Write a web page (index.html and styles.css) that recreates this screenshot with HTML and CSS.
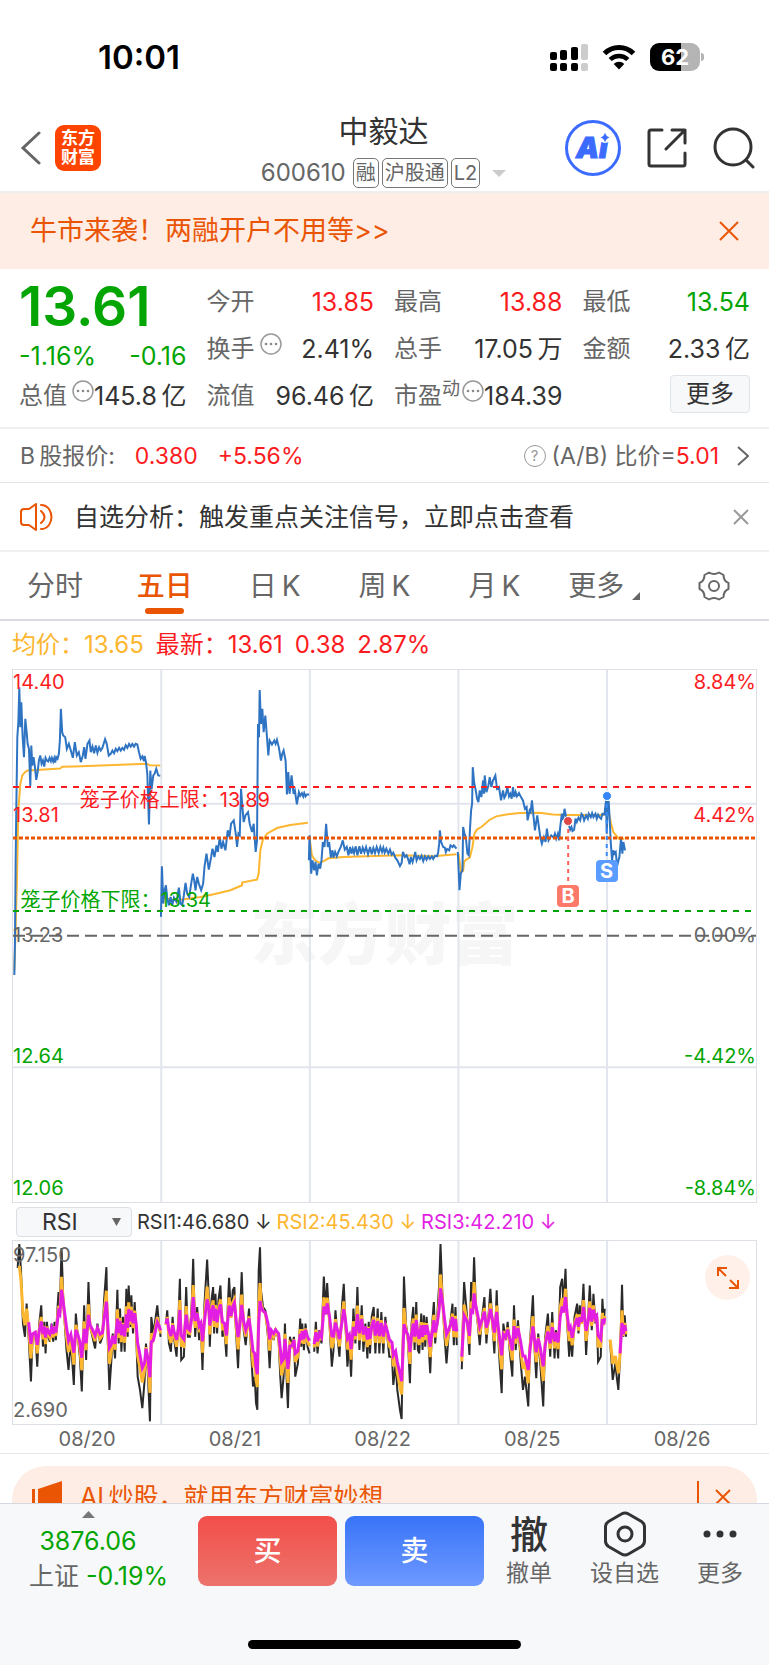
FILE: index.html
```html
<!DOCTYPE html>
<html lang="zh-CN">
<head>
    <meta charset="UTF-8">
    <meta name="viewport" content="width=device-width, initial-scale=1.0">
    <title>中毅达 600610</title>
    <link rel="stylesheet" href="styles.css">
</head>
<body>

    <header>
        <div class="status-bar">
            <span class="clock">10:01</span>
            <div class="status-icons">
                <svg width="38" height="27" viewBox="0 0 38 27">
                    <rect x="0" y="8" width="7" height="8" rx="2"/>
                    <rect x="10" y="6" width="7" height="10" rx="2"/>
                    <rect x="21" y="3" width="7" height="13" rx="2"/>
                    <rect x="31" y="0" width="7" height="16" rx="2" fill="#ccc"/>
                    <rect x="0" y="19" width="7" height="8" rx="2"/>
                    <rect x="10" y="19" width="7" height="8" rx="2"/>
                    <rect x="21" y="19" width="7" height="8" rx="2"/>
                    <rect x="31" y="19" width="7" height="8" rx="2" fill="#ccc"/>
                </svg>
                <svg width="34" height="26" viewBox="0 0 34 26">
                    <path d="M2.500 9.500a20.500 20.500 0 0 1 29 0" fill="none" stroke="#000" stroke-width="5"/>
                    <path d="M8.200 15.500a12.500 12.500 0 0 1 17.600 0" fill="none" stroke="#000" stroke-width="4.500"/>
                    <path d="M17 25.500l-5.300-5.500a7.500 7.500 0 0 1 10.600 0z"/>
                </svg>
                <div class="battery">62</div>
            </div>
        </div>

        <nav class="nav">
            <div class="nav-side">
                <button class="icon-btn" aria-label="返回">
                    <svg width="22" height="34" viewBox="0 0 22 34" fill="none" stroke="#666" stroke-width="3"><path d="M19 2L3 17l16 15" stroke-linecap="round"/></svg>
                </button>
                <a class="logo" href="#">东方<br>财富</a>
            </div>
            <div class="nav-title">
                <h1>中毅达</h1>
                <div class="code-row">
                    <span class="code">600610</span>
                    <span class="tag">融</span>
                    <span class="tag">沪股通</span>
                    <span class="tag">L2</span>
                    <svg class="caret" width="14" height="7" viewBox="0 0 14 7"><path d="M0 0h14L7 7z" fill="#ccc"/></svg>
                </div>
            </div>
            <div class="nav-side nav-right">
                <button class="icon-btn" aria-label="Ai">
                    <svg width="56" height="56" viewBox="0 0 56 56">
                        <circle cx="28" cy="28" r="26.500" fill="#fff" stroke="#3b6bff" stroke-width="3"/>
                        <text class="ai-text" x="11" y="38">Ai</text>
                        <circle cx="40" cy="17" r="6" fill="#fff"/>
                        <path d="M40 12.500q1 4 4.500 5-3.500 1-4.500 5-1-4-4.500-5 3.500-1 4.500-5z" fill="#3b6bff"/>
                    </svg>
                </button>
                <button class="icon-btn" aria-label="分享">
                    <svg width="40" height="40" viewBox="0 0 40 40" fill="none" stroke="#333" stroke-width="3" stroke-linecap="round" stroke-linejoin="round"><path d="M15 2H4Q2 2 2 4v32q0 2 2 2h32q2 0 2-2V25M25 2h13v13M38 2L19 21"/></svg>
                </button>
                <button class="icon-btn" aria-label="搜索">
                    <svg width="42" height="42" viewBox="0 0 42 42" fill="none" stroke="#333" stroke-width="3" stroke-linecap="round"><circle cx="20" cy="20" r="18"/><path d="M33 33l7 7"/></svg>
                </button>
            </div>
        </nav>
    </header>

    <main>
        <div class="banner">
            <a href="#">牛市来袭！两融开户不用等&gt;&gt;</a>
            <button class="icon-btn" aria-label="关闭">
                <svg width="20" height="20" viewBox="0 0 20 20" stroke="#ea5504" stroke-width="2"><path d="M1 1l18 18M19 1L1 19"/></svg>
            </button>
        </div>

        <section class="quote">
            <div class="price-box">
                <div class="price">13.61</div>
                <div class="cell green"><b>-1.16%</b><b>-0.16</b></div>
            </div>
            <div class="cell"><span>今开</span><b class="red">13.85</b></div>
            <div class="cell"><span>最高</span><b class="red">13.88</b></div>
            <div class="cell"><span>最低</span><b class="green">13.54</b></div>
            <div class="cell"><span>换手<svg class="dots" viewBox="0 0 22 22"><use href="#more-dots"/></svg></span><b>2.41%</b></div>
            <div class="cell"><span>总手</span><b>17.05&thinsp;万</b></div>
            <div class="cell"><span>金额</span><b>2.33&thinsp;亿</b></div>
            <div class="cell"><span>总值<svg class="dots" viewBox="0 0 22 22"><use href="#more-dots"/></svg></span><b>145.8&thinsp;亿</b></div>
            <div class="cell"><span>流值</span><b>96.46&thinsp;亿</b></div>
            <div class="cell pe"><span>市盈<sup>动</sup><svg class="dots" viewBox="0 0 22 22"><use href="#more-dots"/></svg></span><b>184.39</b></div>
            <div class="cell cell-more"><button class="more-btn">更多</button></div>
        </section>

        <div class="b-share">
            <span>B&thinsp;股报价:</span>
            <span class="red">0.380</span>
            <span class="red">+5.56%</span>
            <a class="ratio" href="#">
                <i class="help">?</i>
                <span>(A/B) 比价=<span class="red">5.01</span></span>
                <svg width="12" height="20" viewBox="0 0 12 20" fill="none" stroke="#666" stroke-width="2"><path d="M1 1l10 9-10 9"/></svg>
            </a>
        </div>

        <div class="notice">
            <svg width="34" height="28" viewBox="0 0 34 28" fill="none" stroke="#ea5504" stroke-width="2" stroke-linecap="round" stroke-linejoin="round"><path d="M16 1v26l-7-5H4q-3 0-3-3V9q0-3 3-3h5zM21 8q7 6 0 12M21 2q5 0 8 4 5 8 0 16-3 4-8 4"/></svg>
            <a href="#">自选分析：触发重点关注信号，立即点击查看</a>
            <button class="icon-btn" aria-label="关闭">
                <svg width="16" height="16" viewBox="0 0 16 16" stroke="#999" stroke-width="2"><path d="M1 1l14 14M15 1L1 15"/></svg>
            </button>
        </div>

        <div class="tabs">
            <button>分时</button>
            <button class="active">五日</button>
            <button>日&thinsp;K</button>
            <button>周&thinsp;K</button>
            <button>月&thinsp;K</button>
            <button>更多<svg class="corner" width="8" height="8" viewBox="0 0 8 8"><path d="M8 0v8H0z" fill="#666"/></svg></button>
            <button aria-label="设置">
                <svg width="32" height="30" viewBox="0 0 32 30" fill="none" stroke="#666" stroke-width="2" stroke-linejoin="round"><path d="M11 1.500q5 3 10 0l4.500 2.500q0 6 5 8v6q-5 2-5 8L21 28.500q-5-3-10 0L6.500 26q0-6-5-8v-6q5-2 5-8z"/><circle cx="16" cy="15" r="5"/></svg>
            </button>
        </div>

        <div class="legend">
            <span class="yellow">均价：13.65</span>
            <span class="red">最新：13.61</span>
            <span class="red">0.38</span>
            <span class="red">2.87%</span>
        </div>

        <div class="chart">
            <span class="watermark">东方财富</span>
            <svg class="plot" viewBox="36 28 2235 1599" preserveAspectRatio="none">
                <g class="grid">
                    <path d="M482 28v1599M929 28v1599M1376 28v1599M1823 28v1599M36 430h2235M36 1222h2235"/>
                </g>
                <g class="avg-line">
                    <polyline points="40,930 44,800 48,650 52,450 58,370 64,345 72,335 80,330 130,327 178,324 184,319 220,318 300,315 438,310 448,314 479,315"/>
                    <polyline points="486,690 492,712 515,720 545,718 600,710 640,702 690,690 725,675 725,667 770,658 775,640 780,570 787,540 800,520 830,503 870,494 923,487"/>
                    <polyline points="928,530 935,585 945,600 958,608 972,602 985,594 1030,590 1100,588 1200,585 1300,588 1370,582"/>
                    <polyline points="1376,580 1384,635 1390,632 1393,605 1400,597 1410,592 1418,560 1424,520 1432,507 1445,500 1470,478 1490,468 1520,462 1560,458 1620,457 1660,462 1700,464 1815,464"/>
                    <polyline points="1822,450 1830,465 1835,490 1842,515 1850,525 1858,535 1875,535"/>
                </g>
                <g class="price-line">
                    <polyline points="40,945 42,840 44,600 46,440 49,230 52,185 55,80 58,200 61,125 65,230 69,290 73,175 77,215 80,250 84,265 88,378 91,255 94,315 98,290 102,320 106,358 110,335 114,300 118,285 122,310 126,300 130,318 134,292 138,300 142,303 146,292 150,302 153,292 157,303 160,293 163,306 166,290 170,295 174,280 177,240 180,145 184,215 187,225 193,230 198,265 204,250 210,270 216,292 222,245 228,285 234,275 240,305 246,285 250,260 254,295 260,250 266,240 270,275 275,258 280,278 285,255 290,277 295,260 300,270 305,262 313,236 318,250 324,285 330,280 335,270 340,278 345,265 350,272 355,262 360,270 365,262 370,268 375,254 380,262 385,250 390,258 395,250 400,258 405,250 410,252 415,275 420,295 425,288 430,302 432,286 436,305 440,340 445,492 449,330 453,385 458,345 462,340 467,325 473,345 479,346"/>
                    <polyline points="481,770 484,618 488,730 492,690 496,675 500,715 505,735 510,710 515,735 520,712 528,725 535,682 540,730 545,735 550,705 555,668 560,700 566,710 572,670 577,640 581,660 585,690 590,650 595,670 602,690 608,670 612,620 618,580 625,628 632,590 636,565 642,590 648,555 652,575 658,530 663,565 668,545 675,570 682,510 687,530 692,490 700,480 706,520 710,560 714,520 718,525 722,385 726,440 730,485 735,465 743,455 748,490 755,515 760,490 766,575 770,540 773,190 776,230 778,88 782,190 786,145 790,215 795,165 800,230 804,285 808,240 815,252 822,240 826,250 830,238 836,262 842,300 846,280 850,270 856,300 860,402 864,335 868,400 874,345 880,400 884,390 886,405 890,432 896,395 900,406 905,398 909,408 912,398 916,408 920,402 927,402"/>
                    <polyline points="926,600 928,525 933,640 937,600 942,630 946,605 950,645 955,610 960,625 964,600 968,545 973,560 978,490 983,560 987,545 992,592 997,570 1000,592 1005,575 1010,588 1016,572 1022,560 1028,540 1034,568 1040,560 1045,585 1050,560 1054,580 1058,565 1062,578 1067,558 1072,585 1078,558 1083,580 1088,562 1093,576 1098,560 1104,582 1110,560 1115,582 1120,563 1125,578 1130,560 1136,578 1141,560 1146,575 1150,562 1154,577 1159,565 1165,580 1170,568 1175,583 1180,577 1186,592 1192,600 1200,617 1205,608 1209,575 1215,590 1220,585 1225,598 1229,612 1233,590 1238,605 1243,587 1246,575 1250,600 1255,588 1260,596 1265,586 1270,602 1275,588 1280,598 1285,588 1290,596 1296,588 1300,596 1306,586 1312,588 1315,575 1318,550 1320,510 1324,545 1330,560 1335,562 1338,575 1342,566 1348,570 1352,555 1358,560 1362,555 1370,565"/>
                    <polyline points="1374,575 1377,640 1379,690 1383,640 1388,630 1390,500 1394,520 1398,530 1403,580 1407,585 1411,500 1414,450 1417,430 1419,320 1423,365 1428,390 1432,415 1436,425 1440,390 1445,410 1450,360 1453,400 1455,345 1460,395 1466,375 1470,350 1475,380 1480,360 1487,345 1492,385 1498,380 1504,420 1510,390 1514,412 1518,405 1523,380 1528,408 1532,400 1536,415 1540,380 1544,410 1548,395 1552,408 1558,398 1564,410 1570,420 1576,445 1581,440 1584,480 1590,450 1593,455 1597,420 1602,470 1606,510 1613,465 1618,500 1622,530 1627,550 1633,530 1638,545 1642,505 1647,540 1655,525 1662,532 1666,520 1670,535 1675,520 1679,540 1682,500 1687,460 1691,480 1695,445 1700,470 1706,485 1712,508 1716,500 1719,512 1724,508 1728,475 1732,485 1737,472 1742,480 1746,460 1750,465 1754,480 1760,465 1765,475 1768,460 1774,470 1778,458 1782,470 1788,460 1792,475 1796,463 1800,470 1805,475 1809,460 1815,462 1820,420 1822,520 1825,425 1828,425 1831,480 1834,545 1838,600 1842,570 1845,580 1849,575 1852,605 1855,610 1860,590 1865,535 1869,580 1872,545 1877,570"/>
                </g>
                <path class="limit up" d="M36 380h2235"/>
                <path class="limit down" d="M36 752h2235"/>
                <path class="limit zero" d="M36 827h2235"/>
                <path class="limit now" d="M36 533h2235"/>
                <path class="buy-line" d="M1706 482v192"/>
                <path class="sell-line" d="M1822 407v194"/>
            </svg>
            <div class="axis left">
                <span class="red">14.40</span>
                <span class="red upper">13.81</span>
                <span class="grey">13.23</span>
                <span class="green lower">12.64</span>
                <span class="green">12.06</span>
            </div>
            <div class="axis right">
                <span class="red">8.84%</span>
                <span class="red upper">4.42%</span>
                <span class="grey">0.00%</span>
                <span class="green lower">-4.42%</span>
                <span class="green">-8.84%</span>
            </div>
            <span class="cage cage-up">笼子价格上限：13.89</span>
            <span class="cage cage-down">笼子价格下限：13.34</span>
            <i class="dot buy-dot"></i>
            <i class="dot sell-dot"></i>
            <span class="mark buy-mark">B</span>
            <span class="mark sell-mark">S</span>
        </div>

        <div class="rsi-row">
            <label class="picker">
                <select aria-label="指标">
                    <option>RSI</option>
                    <option>MACD</option>
                    <option>KDJ</option>
                </select>
                <svg width="9" height="8" viewBox="0 0 9 8"><path d="M0 0h9L4.500 8z" fill="#666"/></svg>
            </label>
            <span>RSI1:46.680 ↓</span>
            <span class="yellow">RSI2:45.430 ↓</span>
            <span class="magenta">RSI3:42.210 ↓</span>
        </div>

        <div class="chart rsi-chart">
            <svg class="plot" viewBox="36 151 2235 552" preserveAspectRatio="none">
                <g class="grid"><path d="M482 151v552M929 151v552M1376 151v552M1823 151v552"/></g>
                <g id="rsi1" class="rsi1"></g>
                <g id="rsi2" class="rsi2"></g>
                <g id="rsi3" class="rsi3"></g>
            </svg>
            <div class="axis left">
                <span class="grey">97.150</span>
                <span class="grey">2.690</span>
            </div>
            <button class="expand" aria-label="全屏">
                <svg width="24" height="24" viewBox="0 0 24 24" fill="none" stroke="#ea5504" stroke-width="2"><path d="M2 10V2h9M2 2l8 8M22 14v8h-9M22 22l-8-8"/></svg>
            </button>
        </div>

        <div class="dates">
            <span>08/20</span>
            <span>08/21</span>
            <span>08/22</span>
            <span>08/25</span>
            <span>08/26</span>
        </div>

        <div class="promo">
            <svg width="30" height="32" viewBox="0 0 30 32" fill="#ea5504"><path d="M0 8h3v17H0zM6 8L30 0v32L6 25z"/></svg>
            <a href="#">AI&thinsp;炒股，就用东方财富妙想</a>
            <button class="icon-btn" aria-label="关闭">
                <svg width="16" height="16" viewBox="0 0 16 16" stroke="#ea5504" stroke-width="2"><path d="M1 1l14 14M15 1L1 15"/></svg>
            </button>
        </div>
    </main>

    <footer>
        <div class="trade-bar">
            <a class="index" href="#">
                <svg width="13" height="7" viewBox="0 0 13 7"><path d="M0 7h13L6.500 0z" fill="#777"/></svg>
                <span class="index-value green">3876.06</span>
                <span class="index-change">上证 <span class="green">-0.19%</span></span>
            </a>
            <button class="trade buy">买</button>
            <button class="trade sell">卖</button>
            <button class="tool"><span class="tool-glyph">撤</span>撤单</button>
            <button class="tool">
                <svg width="42" height="46" viewBox="0 0 42 46" fill="none" stroke="#333" stroke-width="3" stroke-linejoin="round"><path d="M17.500 3q3.500-2 7 0l13 7.500q3 2 3 5.500v14q0 3.500-3 5.500l-13 7.500q-3.500 2-7 0l-13-7.500q-3-2-3-5.500V16q0-3.500 3-5.500z"/><circle cx="21" cy="23" r="7"/></svg>
                设自选
            </button>
            <button class="tool">
                <svg width="34" height="46" viewBox="0 0 34 46" fill="#333"><circle cx="4" cy="23" r="3.500"/><circle cx="17" cy="23" r="3.500"/><circle cx="30" cy="23" r="3.500"/></svg>
                更多
            </button>
        </div>
        <div class="home-bar"></div>
    </footer>

    <svg class="defs" width="0" height="0">
        <symbol id="more-dots" viewBox="0 0 22 22">
            <circle cx="11" cy="11" r="10" fill="none" stroke="#999" stroke-width="1.500"/>
            <circle cx="6" cy="11" r="1.300" fill="#888"/><circle cx="11" cy="11" r="1.300" fill="#888"/><circle cx="16" cy="11" r="1.300" fill="#888"/>
        </symbol>
    </svg>

    <script src="rsi.js"></script>
</body>
</html>
```
FILE: rsi.js
```js
// x,y pairs of the fast RSI line, one string per trading day
const days = [
    "50,232 55,160 60,240 66,400 72,440 77,340 83,440 90,575 95,440 103,430 109,530 115,400 121,345 126,470 130,395 134,490 138,395 142,440 147,455 152,400 157,455 161,395 165,450 170,350 173,305 177,350 182,172 187,320 191,390 197,480 203,540 210,450 219,585 225,370 231,440 237,500 243,605 250,345 253,440 256,510 263,275 268,410 275,440 283,475 290,400 298,460 305,440 310,330 317,230 321,450 326,600 332,510 336,430 343,505 350,298 354,460 358,355 362,485 367,380 372,485 377,295 381,440 384,285 389,410 392,315 397,430 402,335 406,420 411,560 418,600 425,655 432,570 436,460 442,560 448,695 452,380 458,430 464,390 470,345 475,400 480,440",
    "496,400 500,360 505,460 511,485 516,380 521,450 528,500 533,400 538,265 542,510 550,500 557,290 562,440 568,440 574,330 578,205 584,440 590,350 596,450 601,400 606,540 612,340 620,207 625,320 628,470 633,330 638,290 641,430 645,310 650,430 654,330 660,285 666,440 672,420 678,500 682,350 686,262 692,380 697,300 702,290 707,430 713,535 718,400 724,245 730,420 736,465 746,355 752,480 758,590 763,560 767,640 771,660 775,240 779,170 782,300 788,350 795,360 803,440 808,535 813,420 820,450 826,415 835,450 840,560 844,625 850,560 854,400 858,540 863,655 869,440 876,470 881,440 885,560 893,520 900,385 903,470 906,400 911,480 916,400 922,470 928,490",
    "942,485 947,395 952,490 958,420 964,460 968,340 971,258 977,360 981,278 988,400 995,530 1000,480 1006,360 1012,440 1018,500 1026,340 1031,280 1036,400 1042,530 1048,460 1053,560 1060,355 1066,460 1072,290 1078,480 1085,345 1090,485 1096,400 1102,505 1106,395 1110,490 1115,380 1121,350 1126,490 1133,355 1138,490 1144,365 1150,490 1156,380 1162,440 1168,500 1176,500 1180,585 1187,520 1192,600 1200,660 1205,688 1208,500 1212,258 1218,400 1224,450 1230,580 1235,400 1240,350 1244,480 1249,335 1254,480 1258,490 1264,370 1268,480 1272,375 1276,470 1280,380 1286,460 1291,550 1297,400 1302,335 1306,460 1312,380 1318,280 1322,160 1328,320 1334,440 1340,520 1346,440 1351,400 1358,340 1362,465 1367,350 1371,465",
    "1386,538 1390,360 1393,275 1402,380 1409,495 1414,275 1419,330 1423,200 1428,340 1434,400 1440,465 1447,380 1454,320 1460,460 1466,380 1472,295 1478,400 1484,490 1491,300 1495,430 1500,520 1506,610 1511,400 1518,450 1524,395 1530,480 1538,560 1543,345 1548,480 1555,390 1562,500 1570,600 1576,560 1586,650 1591,460 1600,315 1605,480 1610,565 1616,430 1622,520 1631,650 1637,440 1645,370 1652,500 1658,365 1665,505 1669,420 1676,505 1682,290 1688,265 1692,350 1698,235 1703,400 1709,500 1713,430 1718,500 1725,380 1733,340 1737,430 1741,345 1746,400 1752,280 1760,495 1766,380 1771,285 1777,420 1782,310 1788,400 1792,370 1796,515 1804,500 1809,325 1813,400 1816,355",
    "1832,455 1836,510 1840,570 1848,520 1852,560 1857,600 1862,500 1868,283 1872,440 1876,375 1880,440"
];
const middle = 420;

function addLine(id, points) {
    const line = document.createElementNS("http://www.w3.org/2000/svg", "polyline");
    line.setAttribute("points", points.map(p => p.join(",")).join(" "));
    document.getElementById(id).appendChild(line);
}

days.forEach(function (day, n) {
    const fast = day.split(" ").map(p => p.split(",").map(Number));
    let trend = fast[0][1];
    const mid = [];
    const slow = [];
    fast.forEach(function ([x, y]) {
        trend += (y - trend) * 0.35;
        mid.push([x, Math.round(middle + (y - middle) * 0.5 + (trend - middle) * 0.3)]);
        slow.push([x, Math.round(middle - 5 + (y - middle) * 0.22 + (trend - middle) * 0.5)]);
    });
    addLine("rsi1", fast);
    addLine("rsi2", n === 0 ? mid.slice(1) : mid);
    addLine("rsi3", n === 0 || n === 4 ? slow.slice(6) : slow);
});
```
FILE: styles.css
```css
* {
    box-sizing: border-box;
}
body {
    display: flex;
    flex-direction: column;
    height: 100vh;
    margin: 0;
    background-color: #fff;
    color: #333;
    font-family: Inter, "Noto Sans CJK SC", sans-serif;
    font-size: 24px;
    line-height: 32px;
}
main {
    flex: 1;
    min-height: 0;
    overflow: hidden;
}
a {
    color: inherit;
    text-decoration: none;
}
button {
    padding: 0;
    border: none;
    background: none;
    color: inherit;
    font: inherit;
    cursor: pointer;
}
svg {
    display: block;
    flex-shrink: 0;
}
.defs {
    position: absolute;
}
.red {
    color: #fc1c1f;
}
.green {
    color: #03a503;
}
.yellow {
    color: #fdb62f;
}
.magenta {
    color: #e31ee3;
}
.grey {
    color: #666;
}

/* status bar and title */
.status-bar {
    display: flex;
    align-items: center;
    justify-content: space-between;
    height: 112px;
    padding: 2px 69px 0 98px;
    color: #000;
}
.clock {
    font-size: 33px;
    font-weight: 600;
}
.status-icons {
    display: flex;
    align-items: center;
    gap: 14px;
}
.battery {
    position: relative;
    width: 50px;
    height: 28px;
    border-radius: 9px;
    background: linear-gradient(to right, #000 62%, #b4b4b4 62%);
    color: #fff;
    font-size: 22px;
    font-weight: 700;
    line-height: 28px;
    text-align: center;
}
.battery::after {
    content: "";
    position: absolute;
    top: 10px;
    right: -4px;
    width: 3px;
    height: 8px;
    border-radius: 0 3px 3px 0;
    background-color: #b4b4b4;
}
.nav {
    display: grid;
    grid-template-columns: 1fr auto 1fr;
    height: 81px;
    padding: 0 14px 0 20px;
    border-bottom: 2px solid #eee;
}
.nav-side {
    display: flex;
    align-items: center;
    gap: 13px;
    padding-bottom: 8px;
}
.nav-right {
    justify-content: flex-end;
    gap: 26px;
}
.logo {
    width: 46px;
    height: 46px;
    padding: 4px 0;
    border-radius: 9px;
    background-color: #ff4400;
    color: #fff;
    font-size: 17px;
    font-weight: 700;
    line-height: 19px;
    text-align: center;
}
.nav-title h1 {
    margin: 0;
    padding-right: 8px;
    font-size: 30px;
    font-weight: 400;
    line-height: 38px;
    text-align: center;
}
.code-row {
    display: flex;
    align-items: center;
    gap: 3px;
    padding-top: 7px;
    color: #666;
}
.code {
    margin-right: 4px;
    font-size: 24px;
}
.tag {
    padding: 0 2px;
    border: 1px solid #777;
    border-radius: 5px;
    font-size: 20px;
    line-height: 28px;
}
.caret {
    margin: 0 8px 0 9px;
}
.ai-text {
    fill: #3b6bff;
    stroke: #3b6bff;
    stroke-width: 1px;
    font-size: 29px;
    font-style: italic;
    font-weight: 900;
}

.banner {
    display: flex;
    align-items: center;
    justify-content: space-between;
    height: 76px;
    padding: 0 30px;
    background-color: #fdede4;
    color: #ea5504;
    font-size: 27px;
}

/* quote */
.quote {
    display: grid;
    grid-template-columns: repeat(4, 1fr);
    grid-auto-rows: 47px;
    column-gap: 20px;
    padding: 9px 19px 8px;
    border-bottom: 2px solid #f0f0f0;
}
.price-box {
    grid-row: span 2;
}
.price {
    font-size: 55px;
    font-weight: 600;
    line-height: 56px;
    color: #03a503;
}
.price-box .cell {
    line-height: 44px;
}
.cell {
    display: flex;
    align-items: center;
    justify-content: space-between;
    white-space: nowrap;
    color: #333;
}
.cell > span {
    display: flex;
    align-items: center;
    color: #666;
}
.cell b {
    font-size: 25px;
    font-weight: 400;
}
.cell.green {
    color: #03a503;
}
.dots {
    width: 22px;
    height: 22px;
    margin: 0 0 10px 5px;
}
.pe {
    justify-content: flex-start;
}
.pe .dots {
    margin-left: 2px;
}
.pe sup {
    margin-bottom: 14px;
    font-size: 18px;
    line-height: 20px;
}
.cell .more-btn {
    width: 80px;
    height: 38px;
    margin-bottom: 4px;
    border: 1px solid #dfe3ea;
    border-radius: 4px;
    background-color: #f7f8fa;
    line-height: 34px;
}
.cell-more {
    justify-content: flex-end;
}
.b-share {
    display: flex;
    align-items: center;
    gap: 20px;
    height: 54px;
    padding: 0 20px;
    border-bottom: 1px solid #e4e4e4;
    color: #666;
    font-size: 23px;
}
.ratio {
    display: flex;
    align-items: center;
    gap: 6px;
    margin-left: auto;
}
.ratio svg {
    margin-left: 12px;
}
.help {
    width: 22px;
    height: 22px;
    border: 1px solid #999;
    border-radius: 50%;
    color: #999;
    font-size: 15px;
    font-style: normal;
    line-height: 20px;
    text-align: center;
}
.notice {
    display: flex;
    align-items: center;
    gap: 20px;
    height: 69px;
    padding: 0 20px;
    border-bottom: 2px solid #f0f0f0;
    font-size: 25px;
}
.notice .icon-btn {
    margin-left: auto;
}

/* tabs */
.tabs {
    display: grid;
    grid-template-columns: repeat(7, 1fr);
    height: 69px;
    border-bottom: 2px solid #dcdce4;
    color: #666;
    font-size: 28px;
}
.tabs button {
    display: flex;
    position: relative;
    align-items: center;
    justify-content: center;
}
.tabs .active {
    color: #ea5504;
    font-weight: 500;
}
.tabs .active::after {
    content: "";
    position: absolute;
    bottom: 5px;
    width: 39px;
    height: 6px;
    border-radius: 3px;
    background-color: #ea5504;
}
.corner {
    margin: 20px 0 0 8px;
}
.legend {
    display: flex;
    align-items: center;
    gap: 12px;
    height: 48px;
    padding: 0 12px;
    font-size: 24px;
}

/* charts */
.chart {
    position: relative;
    height: 534px;
    margin: 0 12px;
    border: 1px solid #dcdfe6;
    font-size: 20px;
    line-height: 24px;
}
.plot {
    position: absolute;
    width: 100%;
    height: 100%;
}
.plot path,
.plot polyline {
    fill: none;
    stroke-width: 2px;
    vector-effect: non-scaling-stroke;
}
.grid path {
    stroke: #e2e5ed;
}
.avg-line {
    stroke: #fdb62f;
}
.price-line {
    stroke: #2f74c3;
}
.plot .up {
    stroke: #fc1c1f;
    stroke-dasharray: 6 6;
}
.plot .down {
    stroke: #03a503;
    stroke-dasharray: 6 6;
}
.plot .zero {
    stroke: #666;
    stroke-dasharray: 12 6;
}
.plot .now {
    stroke: #ea5504;
    stroke-width: 3px;
    stroke-dasharray: 4 2;
}
.plot .buy-line {
    stroke: #ff5f57;
    stroke-dasharray: 4 4;
}
.plot .sell-line {
    stroke: #3d8bf7;
    stroke-dasharray: 4 4;
}
.axis {
    position: absolute;
    top: 0;
    bottom: 2px;
    display: flex;
    flex-direction: column;
    justify-content: space-between;
}
.axis.left {
    left: 0;
}
.axis.right {
    right: 0;
    text-align: right;
}
.axis .upper {
    margin-top: 12px;
}
.axis .lower {
    margin-bottom: 12px;
}
.watermark {
    position: absolute;
    top: 42%;
    left: 0;
    width: 100%;
    color: #f6f6f6;
    font-size: 67px;
    font-weight: 900;
    line-height: 84px;
    text-align: center;
}
.cage {
    position: absolute;
}
.cage-up {
    top: 118px;
    left: 9%;
    color: #fc1c1f;
}
.cage-down {
    top: 218px;
    left: 1%;
    color: #03a503;
}
.dot {
    position: absolute;
    width: 10px;
    height: 10px;
    border: 1px solid #fff;
    border-radius: 50%;
    transform: translate(-50%, -50%);
}
.mark {
    position: absolute;
    width: 22px;
    height: 22px;
    border-radius: 4px;
    color: #fff;
    font-size: 20px;
    font-weight: 700;
    line-height: 22px;
    text-align: center;
    transform: translateX(-50%);
}
.buy-dot,
.buy-mark {
    left: 74.7%;
}
.sell-dot,
.sell-mark {
    left: 79.9%;
}
.buy-dot {
    top: 151px;
    background-color: #e04848;
}
.sell-dot {
    top: 126px;
    background-color: #3585f5;
}
.buy-mark {
    top: 215px;
    background-color: #ff796b;
}
.sell-mark {
    top: 190px;
    background-color: #5a9cff;
}
.rsi-row {
    display: flex;
    align-items: center;
    gap: 5px;
    height: 37px;
    padding: 0 16px;
    font-size: 20px;
    white-space: nowrap;
}
.picker {
    display: flex;
    position: relative;
    align-items: center;
}
.picker select {
    width: 116px;
    height: 30px;
    padding: 0 25px;
    border: 1px solid #dcdfe6;
    border-radius: 4px;
    background-color: #f7f8fa;
    color: #333;
    font-family: inherit;
    font-size: 23px;
    appearance: none;
}
.picker svg {
    position: absolute;
    right: 11px;
    pointer-events: none;
}
.rsi-chart {
    height: 185px;
}
.rsi-chart .axis {
    top: 2px;
}
.rsi1 {
    stroke: #2a2a2a;
}
.rsi2 {
    stroke: #fdb62f;
}
.rsi3 {
    stroke: #e31ee3;
}
.rsi2 polyline,
.rsi3 polyline {
    stroke-width: 3px;
}
.expand {
    display: flex;
    position: absolute;
    top: 14px;
    right: 6px;
    align-items: center;
    justify-content: center;
    width: 45px;
    height: 45px;
    border-radius: 50%;
    background-color: #fff1ea;
}
.dates {
    display: flex;
    justify-content: space-around;
    padding: 0 12px;
    border-bottom: 1px solid #e6e6e6;
    color: #666;
    font-size: 20px;
    line-height: 28px;
}
.promo {
    display: flex;
    align-items: center;
    gap: 18px;
    height: 62px;
    margin: 12px 12px 0;
    padding: 0 26px 0 20px;
    border-radius: 34px 34px 0 0;
    background-color: #fdede4;
    color: #ea5504;
    font-size: 25px;
}
.promo .icon-btn {
    margin-left: auto;
    padding: 8px 0 8px 16px;
    border-left: 2px solid #ea5504;
}

/* bottom bar */
footer {
    border-top: 1px solid #d4d8e0;
    background-color: #f7f8fa;
}
.trade-bar {
    display: flex;
    gap: 8px;
    height: 136px;
    padding: 7px 26px 0 8px;
}
.index {
    display: flex;
    flex-direction: column;
    align-items: center;
    width: 160px;
    margin-right: 22px;
    color: #666;
    font-size: 25px;
    white-space: nowrap;
}
.index-value {
    margin: 7px 0 3px;
}
.index-change {
    align-self: flex-end;
}
.trade {
    flex: 1;
    height: 70px;
    margin-top: 5px;
    border-radius: 9px;
    color: #fff;
    font-size: 28px;
    font-weight: 500;
}
.buy {
    background: linear-gradient(#f24e49, #ed736c);
}
.sell {
    background: linear-gradient(#3874f8, #6e99ff);
}
.tool {
    display: flex;
    flex-direction: column;
    align-items: center;
    height: 82px;
    margin-left: 14px;
    color: #666;
    font-size: 23px;
    line-height: 32px;
    white-space: nowrap;
}
.tool + .tool {
    margin-left: 30px;
}
.tool-glyph {
    color: #333;
    font-size: 38px;
    font-weight: 500;
    line-height: 46px;
}
.home-bar {
    width: 273px;
    height: 9px;
    margin: 0 auto 16px;
    border-radius: 5px;
    background-color: #000;
}
```
